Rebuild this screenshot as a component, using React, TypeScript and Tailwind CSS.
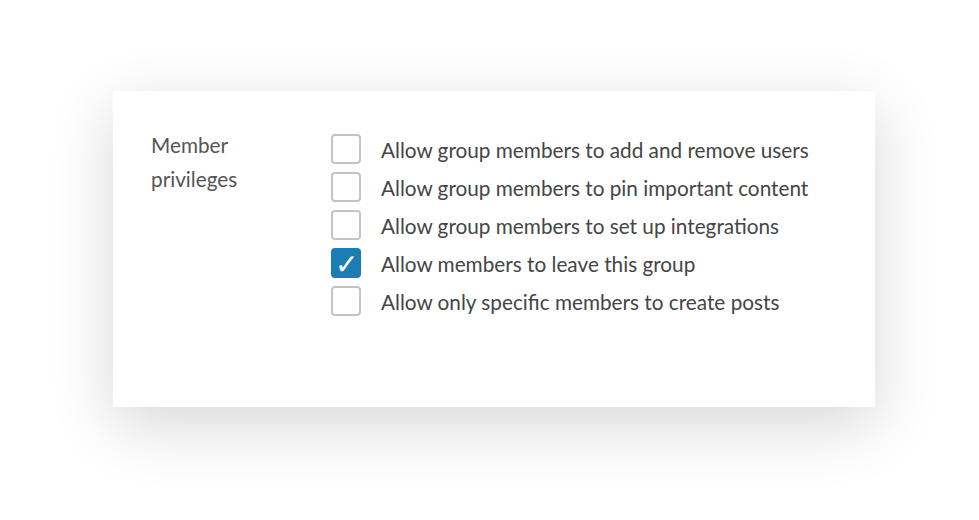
import { useState } from 'react'

const OPTIONS = [
  { id: 'add-users', label: 'Allow group members to add and remove users', checked: false },
  { id: 'pin', label: 'Allow group members to pin important content', checked: false },
  { id: 'integrations', label: 'Allow group members to set up integrations', checked: false },
  { id: 'leave', label: 'Allow members to leave this group', checked: true },
  { id: 'posts', label: 'Allow only specific members to create posts', checked: false },
]

function Checkbox({ label, checked, onToggle }: { label: string; checked: boolean; onToggle: () => void }) {
  return (
    <label className="flex items-center h-[38px] cursor-pointer">
      <span
        className={
          checked
            ? 'w-[30px] h-[30px] rounded-[4px] bg-[#1b7db3] border-2 border-[#1b7db3] flex items-center justify-center text-white text-[28px] leading-none'
            : 'w-[30px] h-[30px] rounded-[4px] bg-white border-2 border-[#c4c4c4]'
        }
        onClick={onToggle}
      >
        {checked ? '✓' : null}
      </span>
      <span className="ml-5 text-[20.75px] text-[#454545] translate-y-[2px]">{label}</span>
    </label>
  )
}

export default function App() {
  const [opts, setOpts] = useState(OPTIONS)

  return (
    <div className="w-[979px] h-[520px] bg-white pt-[91px] pl-[113px]" style={{ fontFamily: 'Lato, "Open Sans", sans-serif' }}>
      <div className="w-[762px] h-[316px] bg-white shadow-[0_18px_60px_rgba(0,0,0,0.16)] flex pl-[38px] pt-[43px]">
        {/* Label */}
        <div className="w-[180px] text-[20.75px] leading-[34px] text-[#555] -mt-[6px]">
          Member
          <br />
          privileges
        </div>

        {/* Options */}
        <div className="flex flex-col -mt-[4px]">
          {opts.map((o, i) => (
            <Checkbox
              key={o.id}
              label={o.label}
              checked={o.checked}
              onToggle={() => setOpts(opts.map((x, j) => (j === i ? { ...x, checked: !x.checked } : x)))}
            />
          ))}
        </div>
      </div>
    </div>
  )
}
